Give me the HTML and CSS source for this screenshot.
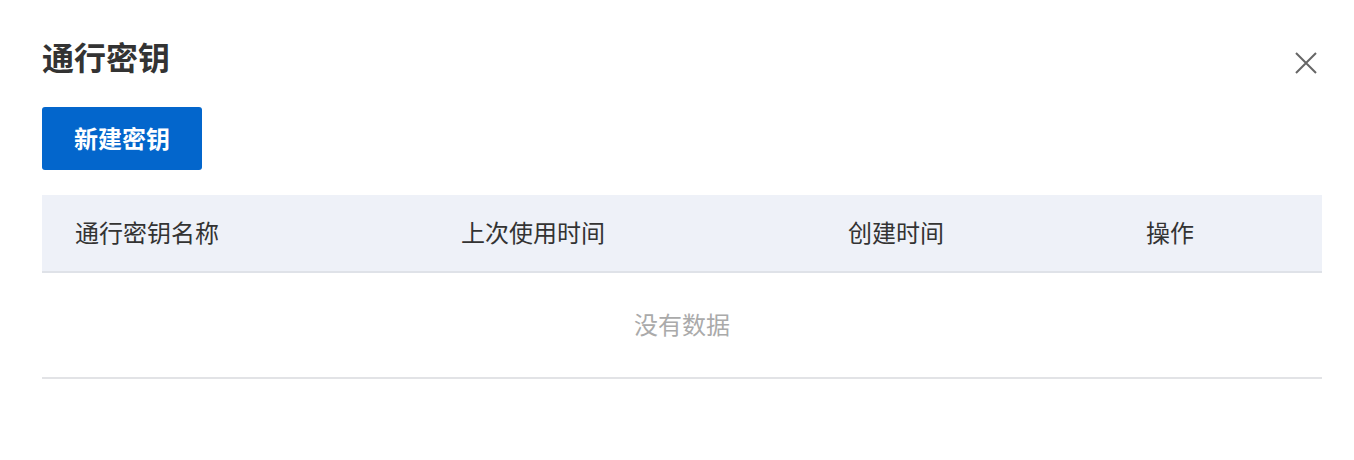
FILE: index.html
```html
<!DOCTYPE html>
<html lang="zh-CN">
<head>
<meta charset="utf-8">
<title>通行密钥</title>
<link rel="stylesheet" href="styles.css">
</head>
<body>
<div class="dialog">
  <div class="dialog-header">
    <h1 class="title">通行密钥</h1>
    <button class="close" aria-label="关闭">
      <svg width="22" height="22" viewBox="0 0 22 22"><path d="M1 1 L21 21 M21 1 L1 21" stroke="#666" stroke-width="2" fill="none"/></svg>
    </button>
  </div>
  <button class="primary">新建密钥</button>
  <div class="table">
    <div class="thead">
      <div class="th">通行密钥名称</div>
      <div class="th">上次使用时间</div>
      <div class="th">创建时间</div>
      <div class="th">操作</div>
    </div>
    <div class="empty">没有数据</div>
  </div>
</div>
</body>
</html>
```

FILE: styles.css
```css
* { box-sizing: border-box; }
html, body { margin: 0; padding: 0; background: #fff; }
body {
  font-family: "Noto Sans CJK SC", "Noto Sans", sans-serif;
  color: #333;
}
.dialog {
  padding: 36px 32px 0 42px;
}
.dialog-header {
  display: flex;
  align-items: center;
  justify-content: space-between;
  height: 44px;
}
.title {
  margin: 0 0 4px;
  font-size: 32px;
  line-height: 44px;
  font-weight: 700;
  color: #333;
}
.close {
  border: 0;
  background: none;
  padding: 0;
  width: 22px;
  height: 22px;
  margin-top: 10px;
  margin-right: 5px;
  cursor: pointer;
}
.close svg { display: block; }
.primary {
  display: block;
  margin-top: 27px;
  width: 160px;
  height: 63px;
  border: 0;
  border-radius: 3px;
  background: #0366cc;
  color: #fff;
  font-family: inherit;
  font-size: 24px;
  font-weight: 700;
  padding: 0 0 3px;
}
.table {
  margin-top: 25px;
  border-bottom: 2px solid #e2e3e6;
}
.thead {
  display: grid;
  grid-template-columns: 386px 387px 298px 1fr;
  height: 78px;
  align-items: center;
  background: #eef1f8;
  border-bottom: 2px solid #dfe2e8;
  padding: 0 0 4px 33px;
}
.th {
  font-size: 24px;
  color: #333;
  font-weight: 400;
}
.empty {
  height: 104px;
  display: flex;
  align-items: center;
  justify-content: center;
  font-size: 24px;
  color: #aaa;
  padding-bottom: 4px;
}
```
